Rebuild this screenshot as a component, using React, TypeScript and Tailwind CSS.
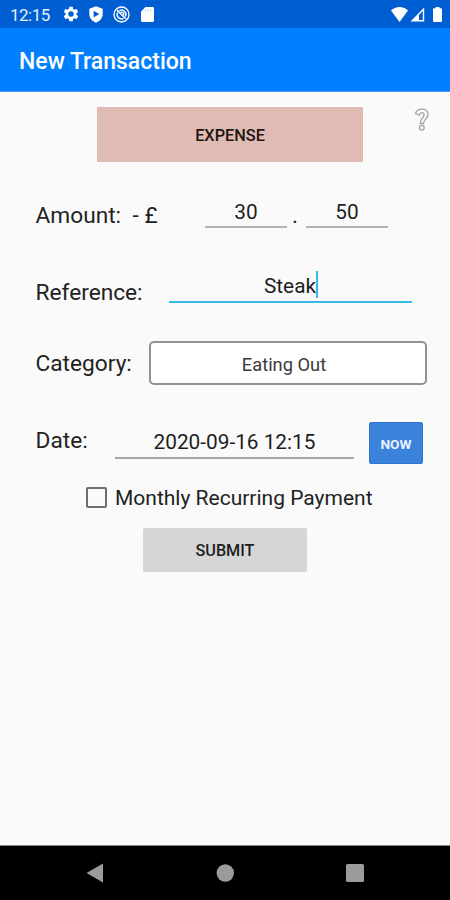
import { useState } from "react";

const LABEL = "text-[22.7px] leading-[26px] text-[#222222]";
const FIELD = "bg-transparent text-center text-[20.8px] leading-[26px] text-[#1e1e1e] outline-none";

function StatusBar() {
  return (
    <div className="flex h-7 items-center bg-[#005ed3] pl-[10px] pr-[8px] text-white">
      <span className="w-[53px] pt-px text-[17px] leading-7 tracking-[-0.5px] text-[#e6f0ff]">12:15</span>
      <svg className="h-[16px] w-[16px]" viewBox="1.500 1.500 21 21" fill="currentColor">
        <path d="M19.14 12.94c.04-.3.06-.61.06-.94 0-.32-.02-.64-.07-.94l2.03-1.58a.49.49 0 0 0 .12-.61l-1.92-3.32a.49.49 0 0 0-.59-.22l-2.39.96c-.5-.38-1.03-.7-1.62-.94l-.36-2.54a.48.48 0 0 0-.48-.41h-3.84a.48.48 0 0 0-.47.41l-.36 2.54c-.59.24-1.13.57-1.62.94l-2.39-.96a.49.49 0 0 0-.59.22L2.74 8.87a.48.48 0 0 0 .12.61l2.03 1.58c-.05.3-.09.63-.09.94s.02.64.07.94l-2.03 1.58a.49.49 0 0 0-.12.61l1.92 3.32c.12.22.37.29.59.22l2.39-.96c.5.38 1.03.7 1.62.94l.36 2.54c.05.24.24.41.48.41h3.84c.24 0 .44-.17.47-.41l.36-2.54c.59-.24 1.13-.56 1.62-.94l2.39.96c.22.08.47 0 .59-.22l1.92-3.32a.48.48 0 0 0-.12-.61zM12 15.6a3.6 3.6 0 1 1 0-7.2 3.6 3.6 0 0 1 0 7.2z" />
      </svg>
      <svg className="ml-[10px] h-[17px] w-[14px]" viewBox="0 0 14 17" fill="none">
        <path d="M7 .3 13.700 2.800v5.200c0 4-2.900 7.400-6.700 8.700C3.200 15.400.3 12 .3 8V2.800z" fill="currentColor" />
        <path d="M4.600 4.700v6.800L10.200 8.100z" fill="#005ed3" />
      </svg>
      <svg className="ml-[10px] h-[17px] w-[17px]" viewBox="0 0 17 17" fill="none" stroke="currentColor">
        <circle cx="8.500" cy="8.500" r="7.500" strokeWidth="1.300" />
        <path d="M4.600 6.500A4.400 4.400 0 0 0 10.500 12.400M6.500 4.600A4.400 4.400 0 0 1 12.400 10.500" strokeWidth="1.400" />
        <path d="M4 4 12.800 12.800" strokeWidth="1.600" />
        <path d="M7.500 6.500A2.200 2.200 0 0 1 10.500 9.500" strokeWidth="1.300" />
      </svg>
      <svg className="ml-[11px] h-[15px] w-[13px]" viewBox="0 0 13 15" fill="currentColor">
        <path d="M4.500 0H11.500C12.300 0 13 .7 13 1.500V13.500C13 14.300 12.300 15 11.500 15H1.500C.7 15 0 14.300 0 13.500V4.500z" />
        <path d="M4.800 2v2.600M7.300 2v2.600M9.800 2v2.600" stroke="#9cc4f5" strokeWidth=".8" />
      </svg>
      <svg className="ml-auto h-[15px] w-[17px]" viewBox="0 0 18 15" preserveAspectRatio="none" fill="currentColor">
        <path d="M9 15 0 3.500C2.500 1.300 5.600 0 9 0s6.500 1.300 9 3.500z" />
      </svg>
      <svg className="ml-[2px] h-[15px] w-[15px]" viewBox="0 0 15 15" fill="none" stroke="currentColor">
        <path d="M13.500 2.200V13.800H2.200z" strokeWidth="1.400" />
        <path d="M9 6.500V14H2z" fill="currentColor" stroke="none" />
      </svg>
      <svg className="ml-[8px] h-[15px] w-[9px]" viewBox="0 0 9 15" fill="currentColor">
        <path d="M2.500 0h4v1.300H8Q9 1.300 9 2.300V14Q9 15 8 15H1Q0 15 0 14V2.300Q0 1.300 1 1.300h1.500z" />
      </svg>
    </div>
  );
}

function NavBar() {
  return (
    <div className="flex h-[54px] items-center justify-between bg-black pl-[86px] pr-[86px] text-[#9b9b9b]">
      <svg className="h-5 w-[18px]" viewBox="0 0 18 20" fill="currentColor">
        <path d="M.5 10 17 .500v19z" />
      </svg>
      <svg className="h-[18px] w-[18px]" viewBox="0 0 18 18" fill="currentColor">
        <circle cx="9.300" cy="9" r="8.700" />
      </svg>
      <svg className="h-[18px] w-[18px]" viewBox="0 0 18 18" fill="currentColor">
        <rect width="18" height="18" rx="1.500" />
      </svg>
    </div>
  );
}

export default function App() {
  const [pounds, setPounds] = useState("30");
  const [pence, setPence] = useState("50");
  const [date, setDate] = useState("2020-09-16 12:15");
  const [recurring, setRecurring] = useState(false);

  return (
    <div className="flex h-[900px] w-[450px] flex-col overflow-hidden bg-[#fafafa] font-[Roboto,sans-serif]">
      <StatusBar />
      <header className="flex h-16 items-center border-b border-[#4a9cf5] bg-[#0080ff] pl-[19px] pt-[5px]">
        <h1 className="text-[23px] font-medium leading-7 text-white">New Transaction</h1>
      </header>

      <main className="flex flex-1 flex-col border-b border-[#8a8a8a]">
        <div className="flex items-start pl-[97px] pt-[15px]">
          <button className="h-[55px] w-[266px] bg-[#e0bbb4] pt-[3px] text-[16.3px] font-medium text-[#1e1412]">EXPENSE</button>
          <button className="ml-[51px] mt-[1px]" aria-label="Help">
            <svg className="h-[24px] w-[16px]" viewBox="0 0 16 24" fill="none" stroke="#a3a3a3" strokeWidth="1.300">
              <path d="M1.500 5.300C2.300 2.700 5 1.200 8.200 1.200c3.500 0 5.800 2 5.800 5 0 4.500-4.300 5.200-4.500 9.300H6.200c0-5.200 3.800-5.700 3.800-8.800 0-1.300-.8-2-2.100-2-1.400 0-2.200.8-2.700 2.300z" />
              <circle cx="7.800" cy="19.800" r="2.400" />
            </svg>
          </button>
        </div>

        <div className="mt-[35px] flex h-[31px] items-start pl-[35.5px]">
          <span className={`mt-[6px] w-[97px] ${LABEL}`}>Amount:</span>
          <span className={`mt-[6px] w-[72.5px] ${LABEL}`}>- £</span>
          <input
            className={`h-[31px] w-[82px] border-b-2 border-[#b3b3b3] ${FIELD}`}
            value={pounds}
            onChange={(e) => setPounds(e.target.value)}
          />
          <span className={`mt-[6px] w-[19px] pr-[3px] text-center ${LABEL}`}>.</span>
          <input
            className={`h-[31px] w-[82px] border-b-2 border-[#b3b3b3] ${FIELD}`}
            value={pence}
            onChange={(e) => setPence(e.target.value)}
          />
        </div>

        <div className="mt-[43px] flex h-[32px] items-start pl-[35.5px]">
          <span className={`mt-[9px] w-[133.5px] ${LABEL}`}>Reference:</span>
          <div className={`flex h-[32px] w-[243px] justify-center border-b-2 border-[#35bbe5] pl-[1px] ${FIELD}`}>
            <span className="mt-[2px]">Steak</span>
            <span className="h-[27px] w-[2px] bg-[#35bbe5]" />
          </div>
        </div>

        <div className="mt-[38px] flex h-[44px] items-center pl-[35.5px]">
          <span className={`pt-[2px] w-[113.5px] ${LABEL}`}>Category:</span>
          <button className="h-[44px] w-[278px] rounded-[5px] border-2 border-[#929292] bg-white pr-[8px] pt-[3px] text-[18.3px] text-[#3a3a3a]">
            Eating Out
          </button>
        </div>

        <div className="mt-[37px] flex h-[42px] items-start pl-[35.5px]">
          <span className={`mt-[6px] w-[79.5px] ${LABEL}`}>Date:</span>
          <input
            className={`mt-[5px] h-[32px] w-[239px] border-b-2 border-[#a6a6a6] pb-[1px] ${FIELD}`}
            value={date}
            onChange={(e) => setDate(e.target.value)}
          />
          <button className="ml-[15px] h-[42px] w-[54px] rounded-[2px] border border-[#2f74cf] bg-[#3b82db] pt-[2px] text-[13.7px] font-bold text-[#e9f2ff]">
            NOW
          </button>
        </div>

        <label className="mt-[21px] flex h-[26px] items-center pl-[86px]">
          <input
            type="checkbox"
            className="-mt-px h-[21px] w-[21px] appearance-none rounded-[2px] border-2 border-[#6e6e6e] checked:bg-[#35bbe5]"
            checked={recurring}
            onChange={() => setRecurring(!recurring)}
          />
          <span className="ml-[8px] whitespace-nowrap text-[21px] leading-[26px] text-[#222222]">Monthly Recurring Payment</span>
        </label>

        <button className="ml-[143px] mt-[17px] h-[44px] w-[164px] rounded-[2px] bg-[#d5d7d6] pt-[2px] text-[16.2px] font-medium text-[#1e1e1e]">
          SUBMIT
        </button>
      </main>
      <NavBar />
    </div>
  );
}
